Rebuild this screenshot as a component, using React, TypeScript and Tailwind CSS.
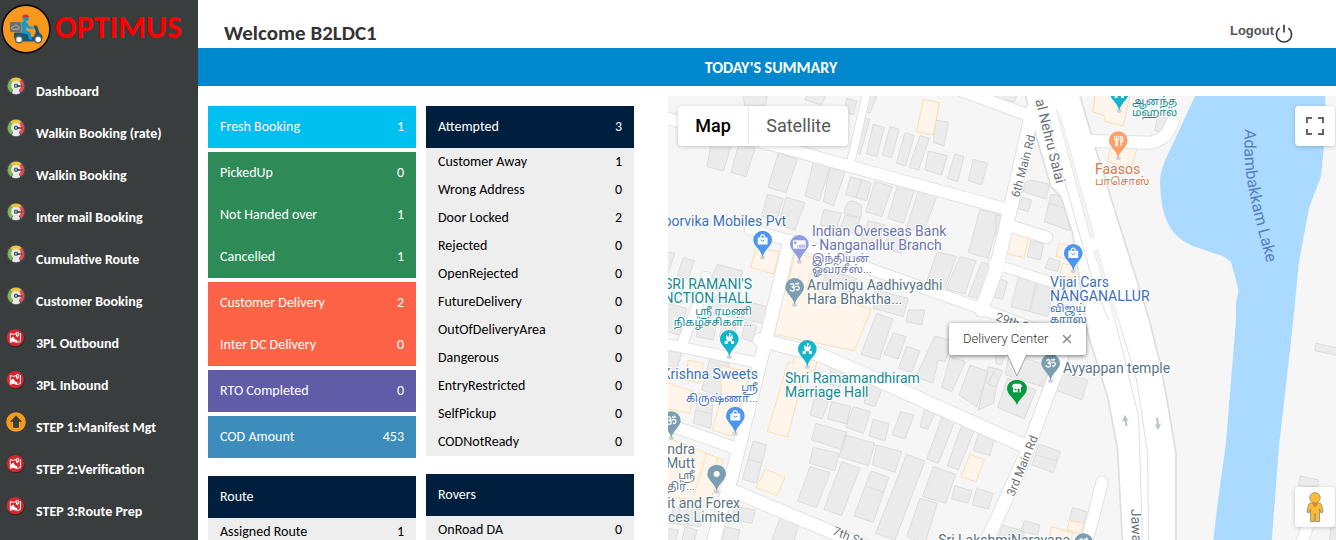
import type { ReactNode } from "react";
import { IoClose } from "react-icons/io5";

type Row = [label: string, value?: string];

interface IMenuItem {
  label: string;
  icon: () => ReactNode;
}

function GaugeIcon() {
  return (
    <svg viewBox="0 0 20 20" className="size-5" aria-hidden="true">
      <circle cx="10" cy="10" r="9.5" fill="#444a58" />
      <path d="M4.300 3.800A8.200 8.200 0 0 0 5 16.500L10 10z" fill="#7cb84c" />
      <path d="M4.300 3.800A8.200 8.200 0 0 1 15.700 3.800L10 10z" fill="#e9c63c" />
      <path d="M15.700 3.800A8.200 8.200 0 0 1 15 16.500L10 10z" fill="#ec4a4a" />
      <path d="M8 12H12L14.200 17A8.200 8.200 0 0 1 5.800 17z" fill="#e9e9e9" />
      <circle cx="10" cy="9.8" r="4.9" fill="#e9e9e9" />
      <circle cx="10" cy="9.8" r="2.3" fill="#5b6373" />
      <circle cx="10" cy="9.8" r="1" fill="#aab0ba" />
      <path d="M11 8.900L16.500 9.600V10.600L11 10.900z" fill="#39404e" />
    </svg>
  );
}

function RouteIcon() {
  return (
    <svg viewBox="0 0 20 20" className="size-5" aria-hidden="true">
      <circle cx="9.8" cy="10.5" r="8.8" fill="#26292a" />
      <circle cx="9.3" cy="9.6" r="8.7" fill="#d9252b" />
      <path d="M4.3 5.5L7.2 6.4L9.8 5.6M4.3 5.5V14.3L7.2 13.4L11.4 14.5L14.4 13.5V5.2" fill="none" stroke="#fff" strokeWidth="1" />
      <path d="M4.6 10.6L7.6 8.6L8.6 11L11.6 12.6L11 14.2L7.2 13L4.6 13.8z" fill="#fff" />
      <path d="M11.3 9.4C10.3 7.8 9.5 7 9.5 5.9A1.9 1.9 0 0 1 13.3 5.9C13.3 7 12.3 7.8 11.3 9.4z" fill="#fff" />
      <circle cx="11.4" cy="5.9" r=".8" fill="#d9252b" />
    </svg>
  );
}

function UploadIcon() {
  return (
    <svg viewBox="0 0 20 20" className="size-5" aria-hidden="true">
      <circle cx="10" cy="10" r="9.8" fill="#f7991d" />
      <path d="M10 3.6L16 9.8H12.9V15.8H7.1V9.8H4z" fill="#3a3d3d" />
    </svg>
  );
}

function ScooterLogo() {
  return (
    <svg viewBox="0 0 50 50" className="size-[50px] shrink-0" aria-hidden="true">
      <circle cx="25" cy="25" r="23.9" fill="#f8991d" stroke="#0c0c0c" strokeWidth="1.6" />
      <rect x="9" y="18" width="11" height="10" rx="1" fill="#6d6e71" />
      <path d="M11.5 25.2H17.6A1.6 1.6 0 0 0 17 22.4A2.4 2.4 0 0 0 12.8 22.6A1.4 1.4 0 0 0 11.5 25.2z" fill="none" stroke="#d0d0d0" strokeWidth=".7" />
      <path d="M13 28.5H28V33H32.5L35 28L32.5 21.5H36L38.5 29A5 5 0 0 1 41.5 34.5L36 33.5L34 37.5H15Q12.5 35 13 28.5z" fill="#175777" />
      <path d="M20.5 18.5Q23 16 25.5 18L28 22L33 23.4L32.4 25L26.6 24.4L25 22.6L25.6 26.5L29.4 28.5L31 35.5H28.2L27 30.5L20.5 29z" fill="#1798cf" />
      <circle cx="24.8" cy="14.2" r="3" fill="#1798cf" />
      <path d="M21.2 13A3.6 3.6 0 0 1 27.2 11.6L28.6 12.6L21.5 13.5z" fill="#d12f2f" />
      <circle cx="18" cy="35.4" r="3.4" fill="#fff" stroke="#5a5b5e" strokeWidth="1.4" />
      <circle cx="37.2" cy="35.4" r="3.4" fill="#fff" stroke="#5a5b5e" strokeWidth="1.4" />
    </svg>
  );
}

const MENU: IMenuItem[] = [
  { label: "Dashboard", icon: GaugeIcon },
  { label: "Walkin Booking (rate)", icon: GaugeIcon },
  { label: "Walkin Booking", icon: GaugeIcon },
  { label: "Inter mail Booking", icon: GaugeIcon },
  { label: "Cumulative Route", icon: GaugeIcon },
  { label: "Customer Booking", icon: GaugeIcon },
  { label: "3PL Outbound", icon: RouteIcon },
  { label: "3PL Inbound", icon: RouteIcon },
  { label: "STEP 1:Manifest Mgt", icon: UploadIcon },
  { label: "STEP 2:Verification", icon: RouteIcon },
  { label: "STEP 3:Route Prep", icon: RouteIcon },
];

const STATUS_CARDS: { color: string; rows: Row[] }[] = [
  { color: "bg-[#00c0ef]", rows: [["Fresh Booking", "1"]] },
  {
    color: "bg-[#2e8b57]",
    rows: [
      ["PickedUp", "0"],
      ["Not Handed over", "1"],
      ["Cancelled", "1"],
    ],
  },
  {
    color: "bg-[#ff6347]",
    rows: [
      ["Customer Delivery", "2"],
      ["Inter DC Delivery", "0"],
    ],
  },
  { color: "bg-[#605ca8]", rows: [["RTO Completed", "0"]] },
  { color: "bg-[#3c8dbc]", rows: [["COD Amount", "453"]] },
];

const ATTEMPTED: Row[] = [
  ["Customer Away", "1"],
  ["Wrong Address", "0"],
  ["Door Locked", "2"],
  ["Rejected", "0"],
  ["OpenRejected", "0"],
  ["FutureDelivery", "0"],
  ["OutOfDeliveryArea", "0"],
  ["Dangerous", "0"],
  ["EntryRestricted", "0"],
  ["SelfPickup", "0"],
  ["CODNotReady", "0"],
];

function StatusCard({ color, rows }: { color: string; rows: Row[] }) {
  return (
    <table className={`w-full text-white ${color}`}>
      <tbody>
        {rows.map(([label, value]) => (
          <tr key={label} className="h-[42px]">
            <th scope="row" className="pl-3 text-left font-normal">{label}</th>
            <td className="pr-3 text-right">{value}</td>
          </tr>
        ))}
      </tbody>
    </table>
  );
}

function DetailTable({ title, total, rows }: { title: string; total?: string; rows: Row[] }) {
  return (
    <table className="w-full bg-[#eeeeee] text-black">
      <thead className="bg-[#001f3f] text-white">
        <tr className="h-[42px]">
          <th scope="col" className="pl-3 text-left font-normal">{title}</th>
          <td className="pr-3 text-right">{total}</td>
        </tr>
      </thead>
      <tbody>
        {rows.map(([label, value]) => (
          <tr key={label} className="h-7">
            <th scope="row" className="pl-3 text-left font-normal">{label}</th>
            <td className="pr-3 text-right">{value}</td>
          </tr>
        ))}
      </tbody>
    </table>
  );
}

// The map geometry is kept at three units per pixel, in four blocks.
const ROADS: { d: string; w: number }[] = [
  { d: "M0 80L360 170L580 232L1020 352L1050 358", w: 34 },
  { d: "M622 0L574 210", w: 22 },
  { d: "M900 0L1110 78", w: 34 },
  { d: "M1118 60L1098 150L1048 370L1008 540L965 660", w: 40 },
  { d: "M270 418L400 455L640 540L960 655L1200 745", w: 32 },
  { d: "M385 470L330 700L265 960L215 1160L155 1370", w: 38 },
  { d: "M138 560L115 640L65 765", w: 30 },
  { d: "M0 758L290 818", w: 30 },
  { d: "M300 750L480 795L680 882L1020 1035L1100 1070", w: 40 },
  { d: "M0 995L220 1072", w: 34 },
  { d: "M200 1195L560 1345L660 1385", w: 38 },
  { d: "M1206 800L1128 1010L1095 1100L1010 1290L970 1370", w: 38 },
  { d: "M1290 153L1470 158Q1522 150 1538 95", w: 36 },
  { d: "M1050 408L1160 442", w: 34 },
  { d: "M1000 520L1200 585", w: 28 },
  { d: "M1326 1177L1298 1290L1275 1370", w: 34 },
  { d: "M1950 1290L1920 1370", w: 34 },
];

const BLOCKS = [
  {
    at: "translate(0 0)",
    houses:
      "M245 0L322 20L315 48L255 48zM445 0L500 10L485 45L435 30zM560 25L590 33L580 75L552 65zM615 10L650 20L630 70L602 60zM155 150L214 165L190 243L141 230zM235 165L285 175L258 260L213 247zM355 190L413 207L378 308L324 292zM460 217L510 230L478 333L435 318zM510 233L556 245L520 347L490 335zM572 260L633 278L620 332L557 314zM605 270L588 323M645 275L697 290L665 380L617 365zM712 288L763 302L730 400L683 385zM775 303L830 320L790 428L740 412zM565 335L580 333L605 345L603 383L552 370L556 350zM322 313L370 325L350 392L305 378zM378 322L435 338L405 420L355 405zM492 358L545 370L530 415L480 405zM555 375L600 385L590 430L540 420zM625 392L675 405L650 470L603 455zM600 80L630 88L600 193L568 185zM640 103L673 112L650 200L619 192zM690 110L718 118L695 203L667 195zM735 128L763 136L737 228L709 220zM780 137L808 145L776 240L747 232zM805 183L862 197L845 255L795 240zM885 192L912 200L893 275L862 265zM940 208L983 220L965 285L925 272zM828 90L866 97L852 167L820 158zM690 415L745 430L725 490L670 475zM832 485L890 500L855 592L800 575zM900 500L948 512L915 612L858 598zM965 517L1010 530L985 632L925 618zM960 358L1020 372L985 505L925 488zM20 485L45 490L24 550L15 548zM70 503L103 512L85 565L52 555zM172 523L248 543L240 580L155 565zM170 615L325 650L310 700L150 668zM20 640L80 655L60 735L20 725zM500 540L590 565L575 610L485 590zM645 600L745 625L730 680L640 655z",
    shops:
      "M790 28L838 38L820 135L770 125zM287 472L358 485L340 552L273 533zM405 490L470 505L440 590L633 658L583 782L305 725L345 565L385 575z",
  },
  {
    at: "translate(0 660)",
    houses:
      "M130 10L175 20L160 90L108 80zM188 35L230 45L220 90L178 80zM255 35L290 50L275 95L245 85zM15 120L65 130L50 180L15 170zM150 145L207 160L180 260L125 240zM115 250L160 262L152 355L100 340zM107 300L155 312M650 10L698 27L658 150L603 133zM700 68L738 80L715 147L672 133zM740 110L780 122L755 187L715 175zM825 78L878 93L855 155L835 150L818 220L768 200zM870 140L917 155L875 245L845 232zM930 165L985 185L950 290L897 255zM985 170L1020 180L1000 280L955 300zM745 0L795 0L785 45L738 35zM515 172L560 180L540 230L500 220zM625 222L668 232L645 290L612 280zM465 262L505 275L487 327L450 315zM515 275L572 290L560 342L503 327zM580 290L632 305L610 370L558 352zM640 328L687 342L675 393L627 378zM722 305L762 315L735 387L697 375zM468 340L560 367L548 420L455 390zM555 375L645 400L625 467L537 440zM650 405L725 425L705 487L637 465zM460 412L537 430L525 482L448 460zM450 470L510 488L470 593L413 573zM545 455L600 475L545 617L492 598zM633 483L687 502L640 637L582 618zM623 530L672 548M740 433L795 453L705 690L647 670zM793 300L825 310L803 358L780 350zM850 310L890 322L835 460L800 447zM910 333L950 345L895 480L862 467zM960 355L1007 370L990 437L940 422zM820 470L888 493L857 580L787 560zM885 527L936 543L925 580L875 567zM950 535L1000 550L985 597L937 585zM780 565L832 580L795 700L740 680zM280 393L320 405L290 520L247 508zM265 447L305 460M225 590L287 600L275 640L215 630zM360 625L418 640L400 700L335 690zM195 650L240 660L230 700L185 700zM20 655L55 660L45 700L20 700zM75 650L112 660L100 700L65 700zM40 590L130 600L120 650L30 640z",
    shops:
      "M85 150L130 160L120 220L75 208zM15 215L100 245L90 310L15 295zM180 165L255 185L265 200L215 378L157 360L185 260zM403 135L472 150L465 180L432 190L383 382L322 365L385 155L400 158zM15 380L190 450L150 575L15 560zM140 430L100 560M175 440L160 490M930 433L973 450L948 515L903 500zM317 477L375 503L352 557L288 533z",
  },
  {
    at: "translate(1008 0)",
    houses:
      "M0 0L65 8L55 35L0 25zM82 305L85 280L105 270L162 283L150 327zM80 323L107 330L97 365L65 355zM165 313L200 318L222 422L145 395zM159 340L207 355M0 375L15 378L0 450zM105 452L143 462L133 510L93 500zM160 503L194 515L185 545L147 535zM485 75L512 85L500 125L477 122zM5 565L35 575L20 628L-10 620zM70 555L122 568L100 665L45 650zM125 575L175 590L155 680L103 665z",
    shops:
      "M300 0L405 0L382 108L327 95L325 78L290 65zM345 165L425 170L405 235L335 215zM45 413L100 427L85 503L28 490zM190 460L240 472L225 510L180 500zM200 520L240 530L230 565L192 555z",
  },
  {
    at: "translate(1008 660)",
    houses:
      "M40 130L160 168L145 232L28 195zM165 180L178 185L165 240L130 225zM35 205L120 240L85 327L5 292zM185 185L275 210L258 270L178 240zM0 175L20 182L0 230L-25 222zM0 120L30 128L15 165L0 160zM130 402L193 425L172 488L107 465zM120 435L185 453M230 593L273 605L263 642L220 632zM85 632L132 645L125 675L75 665zM20 645L85 665L80 700L0 700zM960 100L1030 115L1030 138L957 122zM913 498L968 510L965 530L907 528zM1005 650L1025 655L1025 700L1000 700z",
    shops: "M220 632L263 640L255 672L213 660zM167 650L230 668L220 710L155 700z",
  },
];

const OM =
  "M-13 -8Q-4 -15 -2 -7Q-3 -1 -9 -1Q0 0 -1 8Q-5 15 -15 7M-2 1Q6 -6 12 -2Q17 6 8 9L5 6M2 -12Q8 -7 13 -13M8 -16L9 -15";

const GLYPHS = {
  bag: (
    <g fill="none" stroke="#fff" strokeWidth="3.5">
      <path d="M-13 -6H13V12H-13z" fill="#fff" />
      <path d="M-7 -6Q-6 -16 0 -16Q6 -16 7 -6" />
      <path d="M-6 0Q0 8 6 0" stroke="#4a90e8" strokeWidth="3" />
    </g>
  ),
  om: <path d={OM} fill="none" stroke="#fff" strokeWidth="4" />,
  hall: (
    <path
      d="M-1 -20L7 -16L2 -13V-8H6V-12H10V-1H8V5H14V14H5V6H-5V14H-14V5H-8V-1H-10V-12H-6V-8H-1z"
      fill="#fff"
    />
  ),
  cash: (
    <g>
      <rect x="-19" y="-12" width="38" height="25" fill="#fff" />
      <circle cx="-12" cy="-5" r="3.5" fill="#7986cb" />
      <path d="M-5 2V9M1 2H6V9H1zM10 2H15V9H10z" fill="none" stroke="#7986cb" strokeWidth="2" />
    </g>
  ),
  food: (
    <path
      d="M-11 -15V-3H-7V15H-3V-3H1V-15M-5 -15V-6M8 -15V15M8 -14Q15 -12 13 3H8"
      fill="none"
      stroke="#fff"
      strokeWidth="3.5"
    />
  ),
  dot: <circle r="9" fill="#fff" />,
};

const PINS: { x: number; y: number; color: string; glyph: keyof typeof GLYPHS }[] = [
  { x: 308, y: 450, color: "#4b96f3", glyph: "bag" },
  { x: 226, y: 978, color: "#4b96f3", glyph: "bag" },
  { x: 1240, y: 490, color: "#4b96f3", glyph: "bag" },
  { x: 418, y: 463, color: "#909ce1", glyph: "cash" },
  { x: 404, y: 592, color: "#7b9eb0", glyph: "om" },
  { x: 34, y: 992, color: "#7b9eb0", glyph: "om" },
  { x: 1172, y: 820, color: "#7b9eb0", glyph: "om" },
  { x: 1271, y: 1358, color: "#7b9eb0", glyph: "om" },
  { x: 208, y: 748, color: "#12b5cb", glyph: "hall" },
  { x: 442, y: 778, color: "#12b5cb", glyph: "hall" },
  { x: 1378, y: 10, color: "#12b5cb", glyph: "hall" },
  { x: 1375, y: 152, color: "#ff9e67", glyph: "food" },
  { x: 170, y: 1152, color: "#7b9eb0", glyph: "dot" },
];

interface IPlace {
  color: string;
  x: number;
  anchor?: "start" | "end";
  lines: [text: string, y: number][];
}

const PLACES: IPlace[] = [
  { color: "#3d70b8", x: 786, anchor: "end", lines: [["oorvika Mobiles Pvt", 226]] },
  {
    color: "#6b75ad",
    x: 812,
    lines: [["Indian Overseas Bank", 236], ["- Nanganallur Branch", 250], ["இந்தியன்", 262], ["ஓவர்சீஸ்...", 273]],
  },
  { color: "#587485", x: 807, lines: [["Arulmigu Aadhivyadhi", 290], ["Hara Bhaktha...", 304]] },
  {
    color: "#138a93",
    x: 752,
    anchor: "end",
    lines: [["SRI RAMANI'S", 289], ["NCTION HALL", 303], ["ஸ்ரீ ரமணி", 315], ["நிகழ்ச்சிகள்...", 326]],
  },
  {
    color: "#3d70b8",
    x: 758,
    anchor: "end",
    lines: [["Krishna Sweets", 379], ["ஸ்ரீ", 391], ["கிருஷ்ணா...", 402]],
  },
  { color: "#138a93", x: 785, lines: [["Shri Ramamandhiram", 383], ["Marriage Hall", 397]] },
  {
    color: "#587485",
    x: 695,
    anchor: "end",
    lines: [["ndra", 454], ["Mutt", 468], ["ஸ்ரீ", 479], ["திர்...", 490]],
  },
  { color: "#587485", x: 740, anchor: "end", lines: [["it and Forex", 508], ["ces Limited", 522]] },
  { color: "#138a93", x: 1132, lines: [["ஆனந்த", 105], ["மஹால்", 116]] },
  { color: "#d9744b", x: 1095, lines: [["Faasos", 174], ["பாசொஸ்", 185]] },
  {
    color: "#3d70b8",
    x: 1050,
    lines: [["Vijai Cars", 287], ["NANGANALLUR", 301], ["விஜய்", 312], ["கார்ஸ்", 323]],
  },
  { color: "#587485", x: 1063, lines: [["Ayyappan temple", 373]] },
  { color: "#587485", x: 1070, anchor: "end", lines: [["Sri LakshmiNarayana", 545]] },
];

const isTamil = (text: string) => /[\u0b80-\u0bff]/.test(text);

function MapCanvas() {
  return (
    <svg
      viewBox="668 96 668 444"
      preserveAspectRatio="xMinYMin slice"
      className="block h-full w-full font-[Roboto,'Noto_Sans_Tamil',sans-serif]"
      role="img"
      aria-label="Delivery map"
    >
      <rect x="668" y="96" width="668" height="444" fill="#f6f6f6" />
      <g transform="translate(660 90) scale(.3333)">
        {BLOCKS.map((block) => (
          <g key={block.at} transform={block.at} strokeWidth="3">
            <path d={block.houses} fill="#ebebeb" stroke="#dcdcdc" />
            <path d={block.shops} fill="#fff5ea" stroke="#fcdcb0" />
          </g>
        ))}
        <g fill="none" strokeLinecap="round" strokeLinejoin="round">
          {ROADS.map(({ d, w }) => (
            <path key={d} d={d} stroke="#e2e2e2" strokeWidth={w + 6} />
          ))}
          <path
            d="M1092 0L1123 120L1173 290L1203 320L1238 430L1283 730L1343 920L1373 1080L1388 1370H1548V1090L1523 940L1503 830L1468 690L1308 180L1255 0z"
            fill="#fff"
            stroke="#dedede"
            strokeWidth="5"
          />
          {ROADS.map(({ d, w }) => (
            <path key={d} d={d} stroke="#fff" strokeWidth={w} />
          ))}
          <path
            d="M1190 60L1200 75L1303 440L1293 443zM1303 485L1313 480L1365 655L1430 870L1463 1090L1466 1370M1303 485L1365 690L1380 750L1436 980L1448 1370M1170 90L1180 150L1290 545L1345 690"
            stroke="#dfdfdf"
            strokeWidth="3"
          />
          <path d="M1303 485L1313 480L1380 690L1360 690zM1190 60L1200 75L1303 440L1293 443z" fill="#f3f3f3" />
        </g>
        <path
          d="M1614 0L1523 195Q1495 250 1501 290Q1503 380 1543 430Q1560 450 1598 468L1688 498L1713 515L1736 600L1728 640V690L1698 1060L1673 1240L1658 1370H1834L1858 1060L1888 800L1903 660L1917 515L1948 350L1983 260L1996 130V0z"
          fill="#aadaff"
        />
        <g fill="#b9c1c5">
          <path d="M1394 974L1407 995L1399 991L1403 1008H1397L1393 991L1386 998z" />
          <path d="M1495 1020L1484 1002L1491 1005L1488 984H1494L1497 1004L1504 999z" />
        </g>
        {PINS.map(({ x, y, color, glyph }) => (
          <g key={`${x}-${y}`} transform={`translate(${x} ${y})`}>
            <ellipse cy="53" rx="8" ry="6" fill="#cfd4da" />
            <path d="M0 52C-5 28 -28 18 -28 0A28 28 0 1 1 28 0C28 18 5 28 0 52z" fill={color} />
            {GLYPHS[glyph]}
          </g>
        ))}
        <g transform="translate(1071 895)">
          <path d="M0 50C-7 30 -30 20 -30 0A30 26 0 1 1 30 0C30 20 7 30 0 50z" fill="#079a3f" />
          <path d="M-16 -6L-10 -14H10L16 -6L12 -3V12H-12V-3z" fill="#fff" />
          <path d="M-7 1H-1V6H-7zM2 1H8V12H2z" fill="#079a3f" />
        </g>
      </g>

      {PLACES.map((place) => (
        <g
          key={place.lines[0][0]}
          fill={place.color}
          stroke="#fff"
          strokeWidth="2"
          strokeLinejoin="round"
          textAnchor={place.anchor ?? "start"}
          className="[paint-order:stroke]"
        >
          {place.lines.map(([text, y]) => (
            <text key={text} x={place.x} y={y} fontSize={isTamil(text) ? 11 : 14}>
              {text}
            </text>
          ))}
        </g>
      ))}

      <defs>
        <path id="lake-name" d="M1245 129C1241 180 1256 220 1274 290" />
        <path id="salai-name" d="M1030 78Q1038 112 1056 184" />
      </defs>
      <text fontSize="16" fill="#5480bd">
        <textPath href="#lake-name">Adambakkam Lake</textPath>
      </text>
      <g fill="#6b7176" stroke="#fff" strokeWidth="2" strokeLinejoin="round" className="[paint-order:stroke]">
        <text fontSize="14" textAnchor="end">
          <textPath href="#salai-name" startOffset="100%">
            al Nehru Salai
          </textPath>
        </text>
        <text fontSize="12" transform="translate(1019 198) rotate(-75)">6th Main Rd</text>
        <text fontSize="12" transform="translate(1014 497) rotate(-68)">3rd Main Rd</text>
        <text fontSize="12" transform="translate(995 320) rotate(19)">29th Street</text>
        <text fontSize="12" transform="translate(832 534) rotate(22)">7th St</text>
        <text fontSize="14" transform="translate(1131 509) rotate(88)">Jawa</text>
      </g>
    </svg>
  );
}

function DeliveryMap() {
  return (
    <section className="relative min-w-0 flex-1 overflow-hidden font-[Roboto,sans-serif]">
      <MapCanvas />

      <div className="absolute top-[10px] left-[10px] flex h-10 rounded-sm bg-white text-lg shadow-[0_1px_4px_rgba(0,0,0,0.2)]">
        <button type="button" className="w-[71px] border-r border-[#ececec] font-medium text-black">Map</button>
        <button type="button" className="w-[99px] text-[#565656]">Satellite</button>
      </div>

      <button
        type="button"
        aria-label="Toggle fullscreen view"
        className="absolute top-[10px] right-px flex size-10 items-center justify-center rounded-sm bg-white shadow-[0_1px_4px_rgba(0,0,0,0.2)]"
      >
        <svg viewBox="0 0 18 18" className="size-[18px]" fill="none" stroke="#666" strokeWidth="2">
          <path d="M1 6V1H6M12 1H17V6M17 12V17H12M6 17H1V12" />
        </svg>
      </button>

      <button
        type="button"
        aria-label="Street View"
        className="absolute top-[391px] right-px flex size-10 items-center justify-center rounded-sm bg-white shadow-[0_1px_4px_rgba(0,0,0,0.2)]"
      >
        <svg viewBox="0 0 18 30" className="h-[30px] w-[18px]" stroke="#8a8173" strokeWidth=".8">
          <path d="M5 11H13Q15 11 15.500 13L17 20L15 21L13.500 17V29.500H9.600V22H8.400V29.500H4.500V17L3 21L1 20L2.500 13Q3 11 5 11z" fill="#fbbc34" />
          <circle cx="9" cy="5.800" r="5.200" fill="#fbbc34" />
          <path d="M5.500 11H12.500L9 16z" fill="#e67f3c" stroke="none" />
        </svg>
      </button>

      <div
        role="dialog"
        aria-label="Delivery Center"
        className="absolute top-[227px] left-[281px] flex h-8 w-[137px] items-center justify-between rounded-xs bg-white pr-[11px] pl-[14px] text-[13px] font-light text-[#333] shadow-[0_1px_4px_rgba(0,0,0,0.55)]"
      >
        Delivery Center
        <button type="button" aria-label="Close" className="text-[#8a8a8a]">
          <IoClose className="size-4" />
        </button>
        <svg viewBox="0 0 20 23" className="absolute top-[31px] left-[58px] h-[23px] w-5" aria-hidden="true">
          <path d="M0 0L10 22L20 0" fill="#fff" stroke="#a5a5a5" />
        </svg>
      </div>
    </section>
  );
}

function Sidebar() {
  return (
    <aside className="w-[198px] shrink-0 overflow-hidden bg-[#3a3d3d] text-white">
      <div className="flex h-[70px] items-start gap-1 pt-1 pl-px">
        <ScooterLogo />
        <h1 className="text-[32px] leading-[48px] font-bold text-[#ff0000]">OPTIMUS</h1>
      </div>
      <nav>
        <ul>
          {MENU.map(({ label, icon: Icon }) => (
            <li key={label}>
              <a href="#" className="flex h-[42px] items-start gap-[10px] pt-[6px] pl-[6px] text-sm leading-5 font-bold">
                <Icon />
                <span className="pt-[6px]">{label}</span>
              </a>
            </li>
          ))}
        </ul>
      </nav>
    </aside>
  );
}

export default function App() {
  return (
    <div className="flex h-screen overflow-hidden bg-white font-[Carlito,Lato,sans-serif] text-sm">
      <Sidebar />

      <div className="flex min-w-0 flex-1 flex-col">
        <header className="flex h-12 shrink-0 items-center justify-between pt-[18px] pr-[42px] pl-[26px] text-[#333]">
          <h2 className="text-[21px] font-bold">Welcome B2LDC1</h2>
          <a href="#" className="flex items-center font-['Liberation_Sans',sans-serif] text-[13px] font-bold text-[#555]">
            <span className="pb-1">Logout</span>
            <svg viewBox="0 0 20 20" className="size-5" fill="none" stroke="#333" strokeWidth="1.6" aria-hidden="true">
              <path d="M5.600 5.200A7.600 7.600 0 1 0 14.400 5.200M10 1.800V9.500" />
            </svg>
          </a>
        </header>

        <h3 className="h-[38px] shrink-0 bg-[#0088ce] pl-2 text-center text-base leading-[40px] font-bold text-white">
          TODAY'S SUMMARY
        </h3>

        <main className="flex min-h-0 flex-1 pt-[10px] pl-[10px]">
          <div className="mr-[34px] flex shrink-0 gap-[10px] overflow-hidden pt-[10px]">
            <div className="flex w-[208px] flex-col gap-[18px]">
              <div className="flex flex-col gap-1">
                {STATUS_CARDS.map((card) => (
                  <StatusCard key={card.color} {...card} />
                ))}
              </div>
              <DetailTable title="Route" rows={[["Assigned Route", "1"]]} />
            </div>
            <div className="flex w-[208px] flex-col gap-[18px]">
              <DetailTable title="Attempted" total="3" rows={ATTEMPTED} />
              <DetailTable title="Rovers" rows={[["OnRoad DA", "0"]]} />
            </div>
          </div>
          <DeliveryMap />
        </main>
      </div>
    </div>
  );
}
